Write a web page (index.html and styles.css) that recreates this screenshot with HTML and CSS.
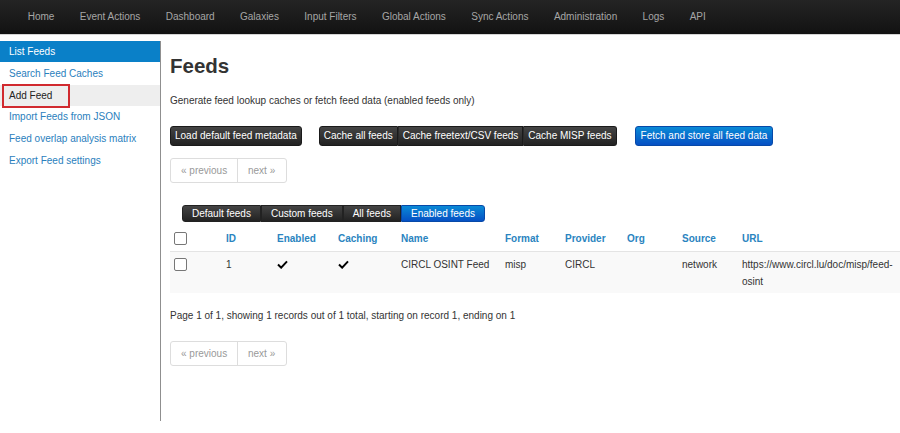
FILE: index.html
```html
<!DOCTYPE html>
<html>
<head>
<meta charset="utf-8">
<link rel="stylesheet" href="styles.css">
</head>
<body>
<div class="navbar">
  <ul class="nav">
    <li>Home</li>
    <li>Event Actions</li>
    <li>Dashboard</li>
    <li>Galaxies</li>
    <li>Input Filters</li>
    <li>Global Actions</li>
    <li>Sync Actions</li>
    <li>Administration</li>
    <li>Logs</li>
    <li>API</li>
  </ul>
</div>
<div class="layout">
  <div class="sidebar">
    <ul class="side-nav">
      <li class="active">List Feeds</li>
      <li>Search Feed Caches</li>
      <li class="hover marked"><span class="mark"></span>Add Feed</li>
      <li>Import Feeds from JSON</li>
      <li>Feed overlap analysis matrix</li>
      <li>Export Feed settings</li>
    </ul>
  </div>
  <div class="content">
    <h2 class="title">Feeds</h2>
    <p class="desc">Generate feed lookup caches or fetch feed data (enabled feeds only)</p>
    <div class="actions">
      <span class="btn inverse">Load default feed metadata</span>
      <span class="btn-group">
        <span class="btn inverse">Cache all feeds</span><span class="btn inverse">Cache freetext/CSV feeds</span><span class="btn inverse">Cache MISP feeds</span>
      </span>
      <span class="btn primary">Fetch and store all feed data</span>
    </div>
    <div class="pagination first">
      <span class="pg prev">« previous</span><span class="pg next">next »</span>
    </div>
    <div class="filters">
      <span class="btn small inverse">Default feeds</span><span class="btn small inverse">Custom feeds</span><span class="btn small inverse">All feeds</span><span class="btn small primary">Enabled feeds</span>
    </div>
    <table class="feeds">
      <colgroup>
        <col class="c-check"><col class="c-id"><col class="c-en"><col class="c-cache"><col class="c-name"><col class="c-format"><col class="c-prov"><col class="c-org"><col class="c-src"><col class="c-url">
      </colgroup>
      <thead>
        <tr>
          <th><span class="cb"></span></th>
          <th>ID</th>
          <th>Enabled</th>
          <th>Caching</th>
          <th>Name</th>
          <th>Format</th>
          <th>Provider</th>
          <th>Org</th>
          <th>Source</th>
          <th>URL</th>
        </tr>
      </thead>
      <tbody>
        <tr>
          <td><span class="cb"></span></td>
          <td>1</td>
          <td><svg class="check" viewBox="0 0 12 10" width="11" height="9"><path d="M1 5 L4.5 8.5 L11 1.5" fill="none" stroke="#000" stroke-width="2.2"/></svg></td>
          <td><svg class="check" viewBox="0 0 12 10" width="11" height="9"><path d="M1 5 L4.5 8.5 L11 1.5" fill="none" stroke="#000" stroke-width="2.2"/></svg></td>
          <td>CIRCL OSINT Feed</td>
          <td>misp</td>
          <td>CIRCL</td>
          <td></td>
          <td>network</td>
          <td>https://www.circl.lu/doc/misp/feed-osint</td>
        </tr>
      </tbody>
    </table>
    <p class="summary">Page 1 of 1, showing 1 records out of 1 total, starting on record 1, ending on 1</p>
    <div class="pagination">
      <span class="pg prev">« previous</span><span class="pg next">next »</span>
    </div>
  </div>
</div>
</body>
</html>
```

FILE: styles.css
```css
* { box-sizing: border-box; }
body {
  margin: 0;
  font-family: "Liberation Sans", Arial, sans-serif;
  font-size: 10px;
  color: #333;
  background: #fff;
}
.navbar {
  height: 35px;
  background: linear-gradient(#242424, #121212);
  border-bottom: 1px solid #d4d4d4;
}
.nav {
  list-style: none;
  margin: 0;
  padding: 0 0 0 15px;
  display: flex;
}
.nav li {
  padding: 0 12.7px;
  line-height: 34px;
  font-size: 10px;
  color: #a6a6a6;
}
.layout {
  display: flex;
  margin-top: 6px;
}
.sidebar {
  width: 161px;
  height: 380px;
  border-right: 1px solid #8f8f8f;
  flex-shrink: 0;
}
.side-nav {
  list-style: none;
  margin: 0;
  padding: 0;
}
.side-nav li {
  position: relative;
  height: 21.7px;
  line-height: 21.7px;
  padding-left: 9px;
  font-size: 10px;
  color: #2a80bd;
}
.side-nav li.active {
  background: #0a80c8;
  color: #fff;
  height: 21px;
  line-height: 21px;
  margin-bottom: 1px;
}
.side-nav li.hover {
  background: #eeeeee;
  color: #222;
}
.side-nav .mark {
  position: absolute;
  left: 2px;
  top: -1px;
  width: 68px;
  height: 24px;
  border: 2px solid #d12a2f;
}
.content {
  flex: 1;
  padding-left: 9px;
  min-width: 0;
}
.title {
  margin: 13px 0 0;
  font-size: 20.5px;
  font-weight: bold;
  line-height: 24px;
  color: #333;
}
.desc {
  margin: 16px 0 0;
  line-height: 14px;
  font-size: 10px;
}
.actions {
  margin-top: 18px;
  display: flex;
  align-items: center;
}
.btn {
  display: inline-block;
  height: 20px;
  line-height: 20px;
  padding: 0 4px;
  font-size: 10px;
  color: #fff;
  border-radius: 3px;
  white-space: nowrap;
}
.btn.inverse {
  background: linear-gradient(#444, #222);
  border: 1px solid #1a1a1a;
  line-height: 18px;
}
.btn.primary {
  background: linear-gradient(#0a8ad6, #0550c4);
  border: 1px solid #0749a8;
  line-height: 18px;
  padding: 0 5px;
}
.actions > .btn.inverse { margin-right: 17px; }
.btn-group { display: inline-flex; margin-right: 18px; }
.btn-group .btn { border-radius: 0; }
.btn-group .btn:first-child { border-radius: 3px 0 0 3px; }
.btn-group .btn:last-child { border-radius: 0 3px 3px 0; }
.btn-group .btn + .btn { border-left: 1px solid #2a2a2a; }
.pagination {
  display: inline-flex;
  margin-top: 13px;
  border: 1px solid #ddd;
  border-radius: 3px;
  height: 25px;
}
.pagination.first { margin-top: 12px; }
.pg {
  line-height: 23px;
  color: #999;
  font-size: 10px;
  padding: 0 10px;
}
.pg.prev { width: 67px; border-right: 1px solid #ddd; padding: 0 0 0 10px; }
.pg.next { width: 48px; padding: 0 0 0 10px; }
.filters {
  margin: 22px 0 0 12px;
  display: flex;
}
.filters .btn {
  height: 17px;
  line-height: 15px;
  padding: 0 9px;
  border-radius: 0;
  font-size: 10px;
}
.filters .btn.inverse { border-color: #222; }
.filters .btn:first-child { border-radius: 3px 0 0 3px; padding-left: 9px; }
.filters .btn:last-child { border-radius: 0 3px 3px 0; }
.feeds {
  margin-top: 4px;
  width: 100%;
  border-collapse: collapse;
  table-layout: fixed;
}
.c-check { width: 52px; }
.c-id { width: 51px; }
.c-en { width: 61px; }
.c-cache { width: 63px; }
.c-name { width: 104px; }
.c-format { width: 60px; }
.c-prov { width: 62px; }
.c-org { width: 55px; }
.c-src { width: 60px; }
.c-url { width: auto; }
.feeds th, .feeds td {
  text-align: left;
  padding: 4px 4px;
  line-height: 17px;
  vertical-align: top;
  font-size: 10px;
}
.feeds td { padding-bottom: 3px; }
.feeds th {
  color: #2a84c0;
  font-weight: bold;
}
.feeds td {
  color: #333;
  background: #f9f9f9;
  border-top: 1px solid #e4e4e4;
}
.cb {
  display: inline-block;
  width: 13px;
  height: 13px;
  border: 1px solid #777;
  border-radius: 2px;
  background: #fff;
  vertical-align: middle;
  margin-top: -2px;
}
.check { vertical-align: middle; margin-top: -2px; }
.summary {
  margin: 16px 0 0;
  line-height: 14px;
  font-size: 10px;
}
.summary + .pagination { margin-top: 18px; }
```
